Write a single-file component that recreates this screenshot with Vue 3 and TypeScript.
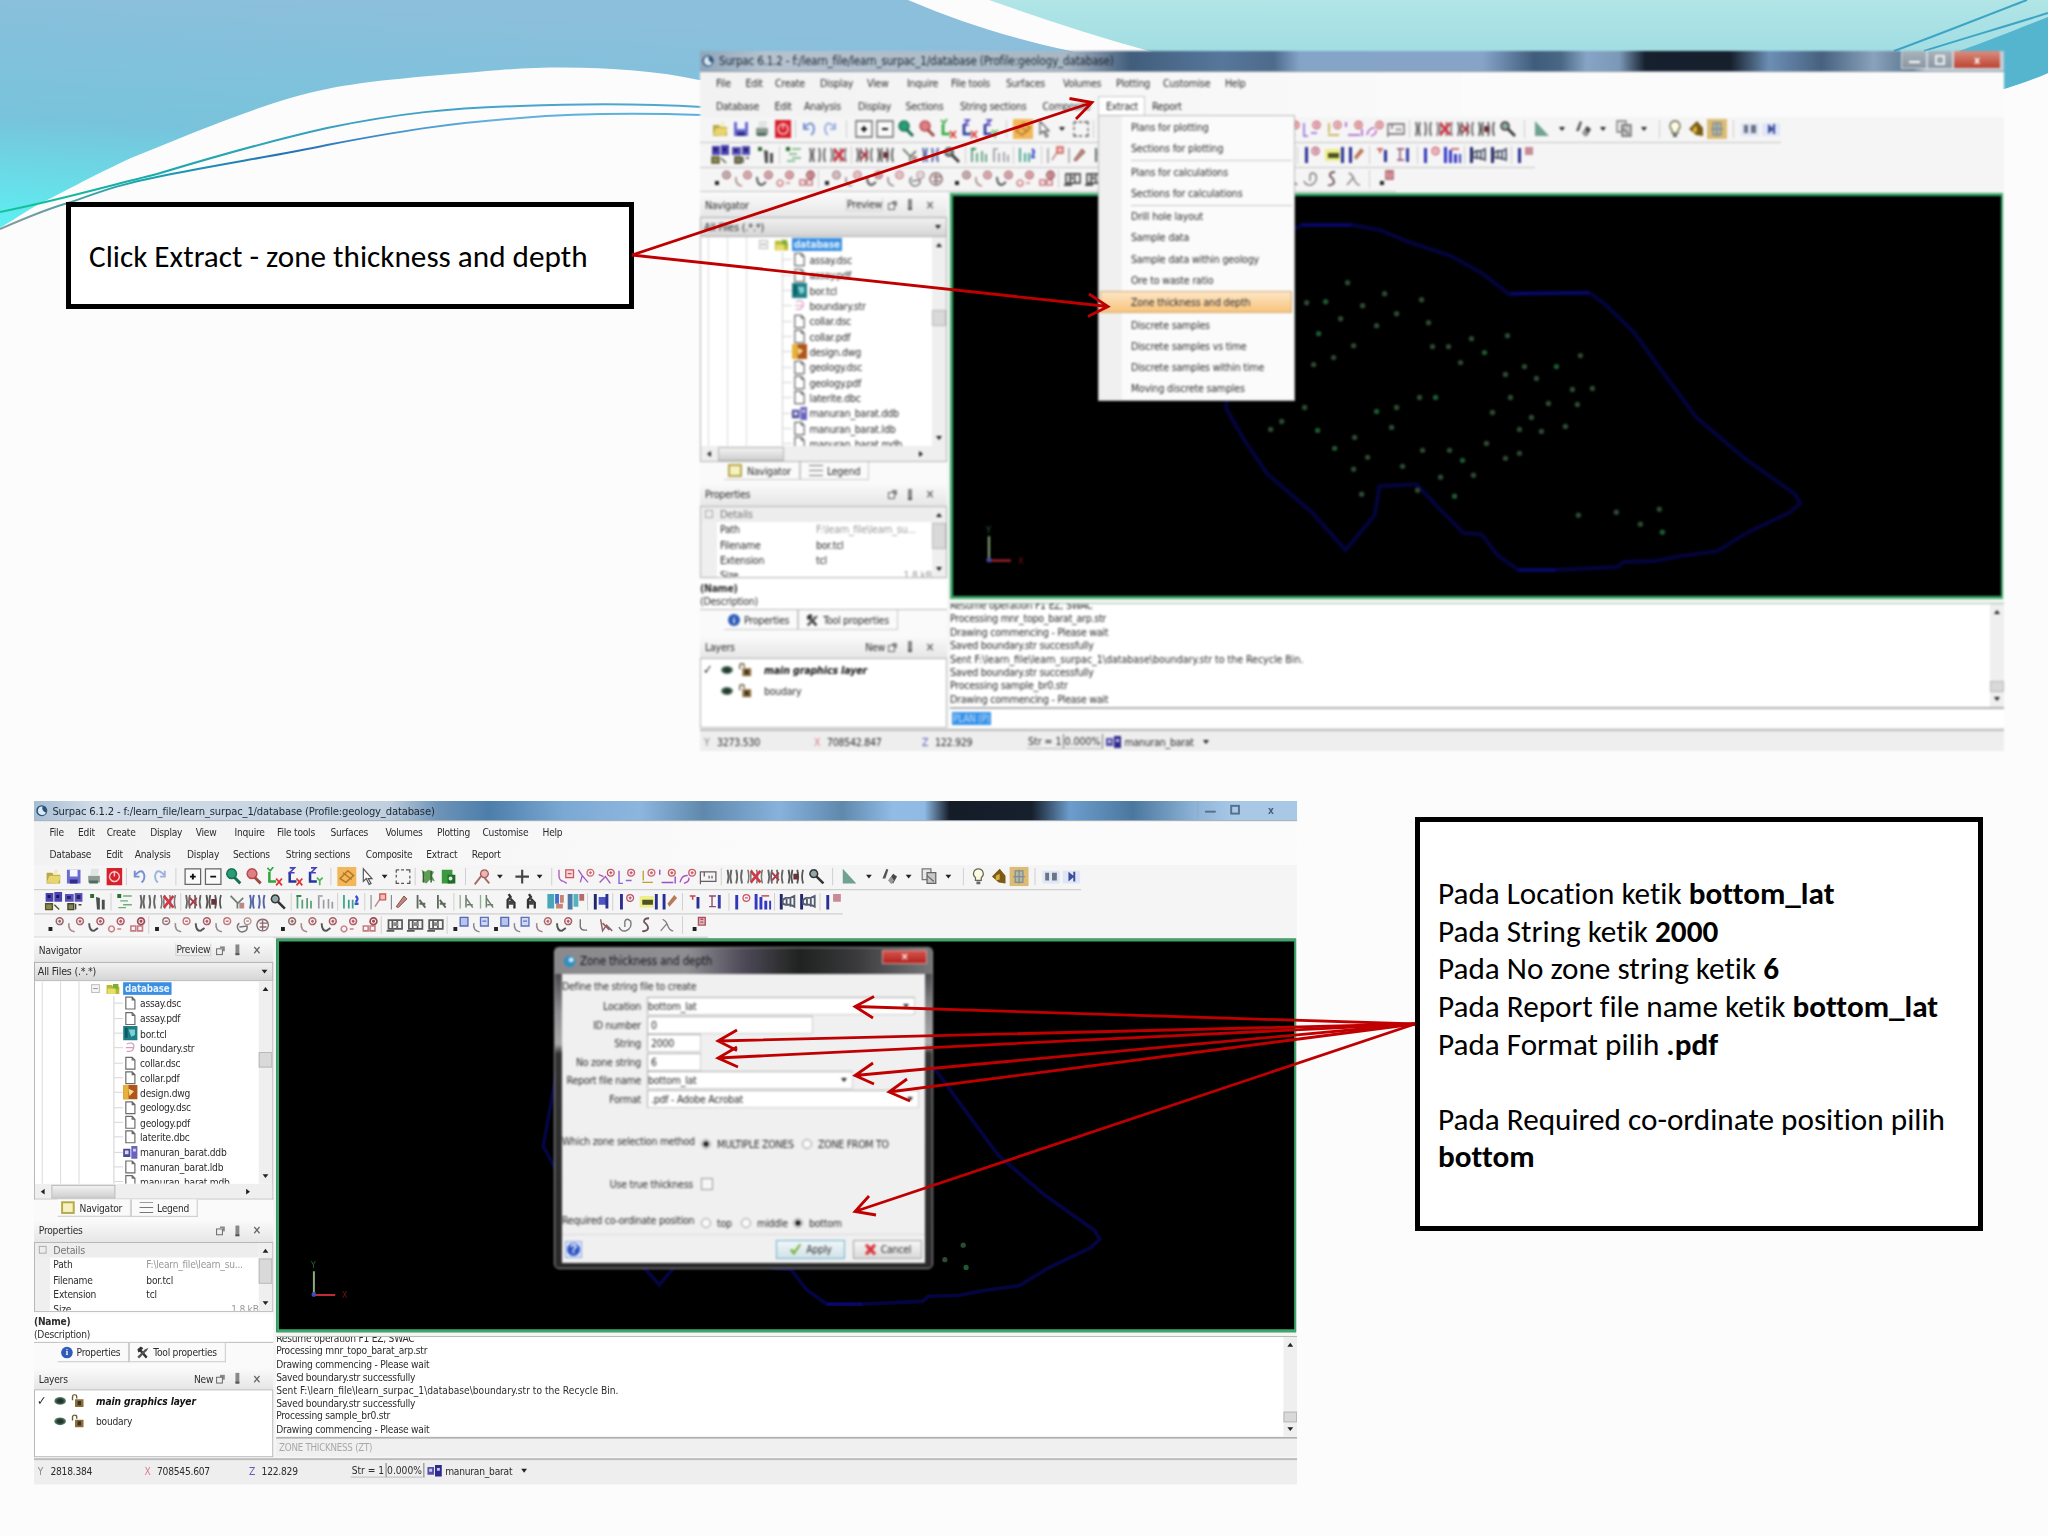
<template>
  <div class="slide">
    <svg class="backdrop" viewBox="0 0 2048 1536">
      <defs>
        <linearGradient id="leftWave" x1="0.3" y1="0" x2="0" y2="1">
          <stop offset="0" stop-color="#8cbfdc" />
          <stop offset="0.55" stop-color="#78c3db" />
          <stop offset="1" stop-color="#5df0f2" />
        </linearGradient>
        <linearGradient id="rightWave" x1="0" y1="0" x2="0" y2="1">
          <stop offset="0" stop-color="#b1e5e6" />
          <stop offset="1" stop-color="#96d8e2" />
        </linearGradient>
        <linearGradient id="strand" gradientUnits="userSpaceOnUse" x1="0" y1="0" x2="700" y2="0">
          <stop offset="0" stop-color="#12c49a" />
          <stop offset="0.22" stop-color="#1aa9a8" />
          <stop offset="0.5" stop-color="#3c9fc4" />
          <stop offset="1" stop-color="#4fabce" />
        </linearGradient>
        <linearGradient id="strandBlue" gradientUnits="userSpaceOnUse" x1="0" y1="0" x2="700" y2="0">
          <stop offset="0" stop-color="#8a9a9a" />
          <stop offset="0.2" stop-color="#16a5b0" />
          <stop offset="0.42" stop-color="#2670b8" />
          <stop offset="0.7" stop-color="#62b2dc" />
          <stop offset="1" stop-color="#5aaede" />
        </linearGradient>
      </defs>
      <path d="M0 0H908C960 22 1010 38 1071 51L1140 80H699C640 67 560 65 500 70C430 76 370 80 327 89C270 100 190 134 131 158C90 177 60 194 39 204C25 212 10 222 0 228Z" fill="url(#leftWave)" />
      <path d="M989 0H2048V73C2030 80 2015 85 2004 89V60H1180L1149 51C1095 36 1040 18 989 0Z" fill="url(#rightWave)" />
      <path d="M2048 17C2010 32 1985 42 1959 51L1990 90L2004 89C2020 84 2035 79 2048 73Z" fill="#55b5cf" />
      <path d="M2027 0C1985 16 1940 34 1894 51M2048 13C2000 28 1965 38 1924 51" fill="none" stroke="#3da5c4" stroke-width="2" />
      <path d="M0 212C60 200 100 188 157 174C210 158 265 142 327 128C400 113 450 108 520 106C600 103 650 104 702 107" fill="none" stroke="url(#strand)" stroke-width="2" />
      <path d="M0 229C30 216 50 208 68 203C100 192 120 184 157 177C220 164 270 157 327 145C400 131 450 123 520 118C580 113 640 113 702 115" fill="none" stroke="url(#strandBlue)" stroke-width="2" />
    </svg>

    <section
      v-for="win in windows"
      :key="win.id"
      class="window"
      :style="{
        left: win.x + 'px',
        top: win.y + 'px',
        height: win.h + 'px',
        transform: `scale(${win.sx}, ${win.sy})`,
      }"
    >
      <header class="titlebar" :class="{ inactive: win.dialog }">
        <svg class="app-icon" viewBox="0 0 16 16"><circle cx="8" cy="8" r="6.5" fill="#2c5378" /><path d="M9 3a5 5 0 1 0 4 7a5 5 0 0 1-4-7" fill="#dce9f4" /></svg>
        <span class="title-text">Surpac 6.1.2 - f:/learn_file/learn_surpac_1/database (Profile:geology_database)</span>
        <div class="controls">
          <span class="ctl"><i class="min" /></span>
          <span class="ctl"><i class="max" /></span>
          <span class="ctl close">x</span>
        </div>
      </header>

      <nav class="menubar">
        <span v-for="m in mainMenu" :key="m.label" :style="{ width: m.w + 'px' }">{{ m.label }}</span>
      </nav>
      <nav class="menubar second">
        <span
          v-for="m in moduleMenu"
          :key="m.label"
          :class="{ open: win.menu && m.label === 'Extract' }"
          :style="{ width: m.w + 'px' }"
        >{{ m.label }}</span>
      </nav>

      <div v-for="(bar, b) in toolbars" :key="b" class="toolbar" :class="'bar-' + b">
        <template v-for="(item, i) in bar" :key="i">
          <i v-if="typeof item === 'number'" class="gap" :class="{ rule: item > 4 }" :style="{ width: item + 'px' }" />
          <i v-else-if="item === 'caret'" class="caret" :class="{ wide: i > 40 }" />
          <svg v-else class="tool" viewBox="0 0 20 20">
            <path
              v-for="(p, n) in icons[item]"
              :key="n"
              :d="p[0]"
              :fill="p[1]"
              :stroke="p[2] || 'none'"
              :stroke-width="p[3] || 1.3"
            />
          </svg>
        </template>
      </div>

      <div class="main">
        <aside class="side">
          <div class="pane-head">
            <span>Navigator</span>
            <span class="preview">Preview</span><i class="dock" /><i class="pin" /><b>×</b>
          </div>
          <div class="filter"><span>All Files (.*.*)</span><i class="caret" /></div>
          <div class="tree">
            <div class="tree-body">
              <div class="guides"><i /><i /><i /></div>
              <ul>
                <li class="root">
                  <i class="expander" />
                  <svg viewBox="0 0 16 16"><path d="M1 4h6l1 2h7v8H1z" fill="#b9b92e" /><path d="M8 3h6v6H8z" fill="#7fae34" /><path d="M2 8h9v6H2z" fill="#e6dd6a" /></svg>
                  <span>database</span>
                </li>
                <li v-for="f in files" :key="f.name">
                  <i class="twig" />
                  <svg viewBox="0 0 16 16">
                    <path v-for="(p, n) in fileIcons[f.kind]" :key="n" :d="p[0]" :fill="p[1]" :stroke="p[2] || 'none'" stroke-width="1.3" />
                  </svg>
                  <span>{{ f.name }}</span>
                </li>
              </ul>
              <div class="vscroll"><i class="up" /><i class="thumb" /><i class="down" /></div>
            </div>
            <div class="hscroll"><i class="left" /><i class="thumb" /><i class="right" /></div>
          </div>
          <div class="tabs">
            <span class="tab nav"><i class="folder" />Navigator</span>
            <span class="tab"><i class="legend" />Legend</span>
          </div>

          <div class="pane-head props-head">
            <span class="grow">Properties</span><i class="dock" /><i class="pin" /><b>×</b>
          </div>
          <div class="props">
            <div class="props-grid">
              <p class="details"><i class="box" />Details</p>
              <p><span>Path</span><em>F:\learn_file\learn_su...</em></p>
              <p><span>Filename</span>bor.tcl</p>
              <p><span>Extension</span>tcl</p>
              <p><span>Size</span><em class="num">1.8 kB</em></p>
            </div>
            <div class="vscroll"><i class="up" /><i class="thumb" /><i class="down" /></div>
          </div>
          <div class="desc"><strong>(Name)</strong><span>(Description)</span></div>
          <div class="tabs prop-tabs">
            <span class="tab nav"><i class="info">i</i>Properties</span>
            <span class="tab">
              <svg viewBox="0 0 16 16"><path d="M2 4l4-3l3 2l-2 2l7 8l-2 2l-7-8l-2 1z" fill="#333" /><path d="M14 3l-3 1l-9 9l2 2l9-9l2-3" fill="#555" /></svg>
              Tool properties
            </span>
          </div>

          <div class="pane-head layers-head">
            <span class="grow">Layers</span><span class="new">New</span><i class="dock" /><i class="pin" /><b>×</b>
          </div>
          <div class="layers">
            <p v-for="(layer, i) in win.layers" :key="layer">
              <span class="tick">{{ i === 0 ? '✓' : '' }}</span>
              <i class="eye" />
              <svg viewBox="0 0 16 16"><path d="M2 7V3a2.5 2.5 0 0 1 5 0v2" fill="none" stroke="#6b5a3a" stroke-width="1.6" /><path d="M5 6h10v9H5z" fill="#8a6d3b" /><path d="M8 8h4v5H8z" fill="#3e3222" /></svg>
              <span :class="{ active: i === 0 }">{{ layer }}</span>
            </p>
          </div>
        </aside>

        <div class="work">
          <svg class="viewport" viewBox="953 196 1049 401" preserveAspectRatio="none">
            <polygon :points="boundary" fill="none" stroke="#04043e" stroke-width="4" />
            <path d="M1302 225H1352M1511 294L1590 293M1519 571L1556 571" stroke="#08086a" stroke-width="3.5" />
            <circle v-for="(d, i) in holes" :key="i" :cx="d[0]" :cy="d[1]" r="2.7" :fill="i % 6 === 4 ? '#1c5a30' : '#2d4a33'" />
            <path d="M989 537V562" stroke="#8fb07c" stroke-width="2" />
            <path d="M989 561.5H1011" stroke="#c22a35" stroke-width="2" />
            <circle cx="989" cy="561" r="2.5" fill="#3d4fa8" />
            <text x="986" y="534" fill="#2c6a2c" font-size="9">Y</text>
            <text x="1018" y="565" fill="#7c1018" font-size="9">X</text>
          </svg>
          <div class="log">
            <div class="lines">
              <p v-for="(line, i) in logLines" :key="i" :class="{ path: line.startsWith('Sent') }">{{ line }}</p>
            </div>
            <div class="vscroll"><i class="up" /><i class="thumb" /><i class="down" /></div>
          </div>
          <div class="command" :class="{ disabled: win.dialog }"><span>{{ win.command }}</span></div>
        </div>
      </div>

      <footer class="status" :class="{ tall: win.dialog }">
        <span class="coord"><b>Y</b>{{ win.status[0] }}</span>
        <span class="coord x"><b>X</b>{{ win.status[1] }}</span>
        <span class="coord z"><b>Z</b>{{ win.status[2] }}</span>
        <span class="cell">Str = 1</span>
        <span class="cell">0.000%</span>
        <svg viewBox="0 0 16 14"><path d="M0 3h7v8H0z" fill="#5551a8" /><path d="M8 1h7v12H8z" fill="#2e2a8e" /><path d="M2 5h3v3H2zM10 4h3v3h-3z" fill="#c9c8ee" /></svg>
        <span class="db">manuran_barat</span><i class="caret" />
      </footer>

      <div v-if="win.menu" class="dropdown">
        <template v-for="(item, i) in extractMenu" :key="i">
          <hr v-if="item === '-'" />
          <p v-else :class="{ hover: item === 'Zone thickness and depth' }">{{ item }}</p>
        </template>
      </div>
    </section>

    <form class="dialog">
      <header>
        <svg viewBox="0 0 16 16"><circle cx="8" cy="8" r="7" fill="#2f8fc4" /><circle cx="10" cy="6" r="3" fill="#d8effa" /></svg>
        <span>Zone thickness and depth</span>
        <b class="x">×</b>
      </header>
      <div class="dialog-body">
        <p class="intro">Define the string file to create</p>
        <div v-for="f in fields" :key="f.label" class="field">
          <label>{{ f.label }}</label>
          <div class="input" :class="{ combo: f.combo }" :style="{ width: f.w + 'px' }">{{ f.value }}<i v-if="f.combo" class="caret" /></div>
        </div>
        <div class="option method">
          <label>Which zone selection method</label>
          <i class="radio on" /><span class="first">MULTIPLE ZONES</span>
          <i class="radio" /><span>ZONE FROM TO</span>
        </div>
        <div class="option true-thick">
          <label>Use true thickness</label>
          <i class="check" />
        </div>
        <div class="option position">
          <label>Required co-ordinate position</label>
          <i class="radio" /><span class="top">top</span>
          <i class="radio" /><span class="middle">middle</span>
          <i class="radio on" /><span>bottom</span>
        </div>
        <div class="actions">
          <i class="help">?</i>
          <button type="button" class="apply">
            <svg viewBox="0 0 16 16"><path d="M1 9l3-2l2 3l7-9l2 1l-9 13z" fill="#7cb342" /></svg>Apply
          </button>
          <button type="button">
            <svg viewBox="0 0 16 16"><path d="M1 3l3-2l4 4l4-4l3 2l-4 5l4 5l-3 2l-4-4l-4 4l-3-2l4-5z" fill="#d9383f" /></svg>Cancel
          </button>
        </div>
      </div>
    </form>

    <div class="callout one"><p>Click Extract - zone thickness and depth</p></div>
    <div class="callout two">
      <p>Pada Location ketik <b>bottom_lat</b></p>
      <p>Pada String ketik <b>2000</b></p>
      <p>Pada No zone string ketik <b>6</b></p>
      <p>Pada Report file name ketik <b>bottom_lat</b></p>
      <p>Pada Format pilih <b>.pdf</b></p>
      <p>&nbsp;</p>
      <p>Pada Required co-ordinate position pilih</p>
      <p><b>bottom</b></p>
    </div>

    <svg class="arrows" viewBox="0 0 2048 1536">
      <path v-for="(a, i) in arrows" :key="i" :d="a" />
    </svg>
  </div>
</template>

<script setup lang="ts">
type Shape = [string, string, string?, number?];

interface AppWindow {
  id: string;
  x: number;
  y: number;
  h: number;
  sx: number;
  sy: number;
  menu: boolean;
  dialog: boolean;
  command: string;
  layers: string[];
  status: string[];
}

const windows: AppWindow[] = [
  {
    id: 'extract',
    x: 700,
    y: 51,
    h: 700,
    sx: 1,
    sy: 1,
    menu: true,
    dialog: false,
    command: 'PLAN (P)',
    layers: ['main graphics layer', 'boudary'],
    status: ['3273.530', '708542.847', '122.929'],
  },
  {
    id: 'zone',
    x: 34,
    y: 801,
    h: 705,
    sx: 0.9686,
    sy: 0.9693,
    menu: false,
    dialog: true,
    command: 'ZONE THICKNESS (ZT)',
    layers: ['main graphics layer', 'boudary'],
    status: ['2818.384', '708545.607', '122.829'],
  },
];

// w is the distance to the start of the next entry
const mainMenu = [
  { label: 'File', w: 29.5 },
  { label: 'Edit', w: 29.5 },
  { label: 'Create', w: 45 },
  { label: 'Display', w: 47 },
  { label: 'View', w: 40 },
  { label: 'Inquire', w: 44 },
  { label: 'File tools', w: 55 },
  { label: 'Surfaces', w: 57 },
  { label: 'Volumes', w: 53 },
  { label: 'Plotting', w: 47 },
  { label: 'Customise', w: 62 },
  { label: 'Help', w: 40 },
];

const moduleMenu = [
  { label: 'Database', w: 58.5 },
  { label: 'Edit', w: 29.5 },
  { label: 'Analysis', w: 54 },
  { label: 'Display', w: 47.5 },
  { label: 'Sections', w: 54.5 },
  { label: 'String sections', w: 82.5 },
  { label: 'Composite', w: 62.5 },
  { label: 'Extract', w: 47 },
  { label: 'Report', w: 50 },
];

const extractMenu = [
  'Plans for plotting',
  'Sections for plotting',
  '-',
  'Plans for calculations',
  'Sections for calculations',
  '-',
  'Drill hole layout',
  'Sample data',
  'Sample data within geology',
  'Ore to waste ratio',
  'Zone thickness and depth',
  'Discrete samples',
  'Discrete samples vs time',
  'Discrete samples within time',
  'Moving discrete samples',
];

const ring = 'M11 6a3.5 3.5 0 1 0 7 0a3.5 3.5 0 1 0-7 0M13 6h3M14.5 4.5v3';
const ringMinus = 'M11 6a3.5 3.5 0 1 0 7 0a3.5 3.5 0 1 0-7 0M13 6h3';
const stripes = 'M2 3q2 7 0 14M6 3q-2 7 0 14M11 3q2 7 0 14M17 3q-2 7 0 14';

const icons: Record<string, Shape[]> = {
  open: [['M3 6h6l1 2h7v9H3z', '#b9a648'], ['M3 16l3-7h12l-3 8z', '#e8d56c'], ['M11 3h4l-1 5h-4z', '#f3ecc0']],
  save: [['M3 3h14v14H3z', '#6a6ad0'], ['M6 3h8v7H6z', '#f4f4ff'], ['M6 13h8v4H6z', '#30308a']],
  print: [['M4 9h12v7H4z', '#8d9a92'], ['M7 2h8l-1 7H6z', '#dfe5e0'], ['M5 14h9v3H5z', '#4e6a58']],
  stop: [['M2 1h16v18H2z', '#d8202c'], ['M10 5a5 5 0 1 0 .1 0M10 4v6', 'none', '#f6c8c8', 1.5]],
  undo: [['M5 9q8-9 10 0q0 5-3 7M5 4v6h5', 'none', '#7690d4', 2]],
  redo: [['M15 9q-8-9-10 0q0 5 3 7M15 4v6h-5', 'none', '#9cb2e0', 2]],
  boxplus: [['M2 2h16v16H2z', '#fafafa', '#666'], ['M10 7v6M7 10h6', 'none', '#111', 2]],
  boxminus: [['M2 2h16v16H2z', '#fafafa', '#666'], ['M7 10h6', 'none', '#111', 2]],
  magGreen: [['M8 2a5 5 0 1 0 .1 0', '#2a9d77', '#16724f', 1.5], ['M11 11l6 6', 'none', '#1b6e4e', 3]],
  magRed: [['M8 2a5 5 0 1 0 .1 0', '#dd7f83', '#b84a50', 1.5], ['M11 11l6 6', 'none', '#9c4a40', 3]],
  mag: [['M7 3a4 4 0 1 0 .1 0', '#8fa8a8', '#333', 1.5], ['M10 10l7 7', 'none', '#333', 2.6]],
  axisA: [['M5 5v10h7', 'none', '#2da83a', 2.6], ['M3 1l3 3l3-4', 'none', '#2da83a', 1.6], ['M12 12l6 7M18 12l-6 7', 'none', '#d33', 1.8]],
  axisB: [['M5 5v10h7', 'none', '#23389a', 2.6], ['M5 1h5l-5 5h5', 'none', '#4b3fbe', 1.6], ['M12 12l6 7M18 12l-6 7', 'none', '#d33', 1.8]],
  axisC: [['M5 5v10h7', 'none', '#23389a', 2.6], ['M6 1h5l-5 5h5', 'none', '#4b3fbe', 1.6], ['M12 11l3 3l3-3M15 14v5', 'none', '#46b84f', 1.7]],
  plane: [['M0 0h20v20H0z', '#f2b758'], ['M3 12l8-8l6 5l-8 7zM6 6l9 7', 'none', '#b3762a', 1.5]],
  pointer: [['M6 2v13l3-3l3 6l2-1l-3-5h4z', '#fff', '#555', 1.2]],
  marquee: [['M3 3h3M8 3h3M13 3h4v3M17 9v3M17 14v3h-3M11 17H8M6 17H3v-3M3 11V8M3 6V3', 'none', '#555', 1.3]],
  people: [['M3 3l4 2l3-2l6 2l-2 4l3 6l-5-2l-4 4l-4-2l2-4z', '#5f9d55'], ['M5 5v11M13 4v12', 'none', '#355c38', 1.5]],
  report: [['M3 3h11v14H3z', '#3c9a3e'], ['M9 8h8v9H9z', '#226b2c'], ['M12 10a2 2 0 1 0 .1 0', '#d8efd0']],
  key: [['M12 3a4 4 0 1 0 .1 0', '#e5b9b6', '#a55', 1.3], ['M9 9l-7 9M12 11l5 6', 'none', '#a86a66', 2]],
  cross: [['M10 3v14M3 10h14', 'none', '#444', 2.2]],
  strA: [['M3 3v6M3 9q0 5 5 6M8 15l3 2', 'none', '#b05ac0', 1.4], ['M10 3h8v8h-8zM12 7h4', '#f6d7da', '#cc5560', 1.3]],
  strB: [['M2 3l4 6l-2 7M6 9l6 7', 'none', '#a05ac8', 1.4], [ring, 'none', '#d36a74', 1.3]],
  strC: [['M3 16l6-6l5 7M2 8l5 2', 'none', '#a85ab8', 1.4], [ring, 'none', '#c85560', 1.3]],
  strD: [['M2 4v13h4M9 14h6', 'none', '#8d66d8', 1.5], [ring, 'none', '#cc5a70', 1.4]],
  strE: [['M6 4v10M5 16h11', 'none', '#c0a030', 1.4], [ring, 'none', '#cc6a70', 1.4]],
  strF: [['M2 3v5M18 10v7M4 16h12', 'none', '#9a50c8', 1.5], [ring, 'none', '#cc5a60', 1.4]],
  strG: [['M2 16q2-8 8-7M6 17q6-2 5-6', 'none', '#b050c0', 1.4], [ring, 'none', '#c8606a', 1.4]],
  ruler: [['M2 5h16v10H2zM6 5v5M11 9v3M14 9v3M2 15v3', 'none', '#665e66', 1.3]],
  hatch: [[stripes, 'none', '#666', 1.9]],
  hatchRed: [[stripes, 'none', '#777', 1.6], ['M5 4l10 12M15 4L5 16', 'none', '#cf3a48', 2.8]],
  hatchIn: [[stripes, 'none', '#666', 1.8], ['M6 6l7 8M13 6l-7 8', 'none', '#a83c46', 2]],
  hatchOut: [[stripes, 'none', '#555', 1.8], ['M7 7h5v6H7z', '#6a3238']],
  hatchBlue: [[stripes, 'none', '#5464a8', 2]],
  wedge: [['M3 2v15h14z', '#6fa293']],
  pens: [['M3 12l4-10l2 1l-3 9z', '#555'], ['M9 14l5-7l4 3l-4 7z', '#484848'], ['M9 14l3-4l3 4l-3 4z', '#9a9a9a']],
  copy: [['M3 2h9v11H3z', '#e8e8e8', '#777', 1.3], ['M8 6h9v11H8zM8 9l7 6', '#c7c7c7', '#666', 1.3]],
  bulb: [['M10 2a5 5 0 0 0-3 9v3h6v-3a5 5 0 0 0-3-9', '#fdfbe0', '#665', 1.3], ['M8 15h4v3H8z', '#666']],
  layersIcon: [['M3 10l8-8l6 7v8l-7-1z', '#7a5a14'], ['M7 9l4-2v6l-4 1z', '#d6b03a']],
  lit: [['M0 0h20v20H0z', '#dcbc74'], ['M6 4h8v12H6zM10 3v14M4 10h12', '#b8b8a0', '#7f8c96', 1.3]],
  winA: [['M1 4h18v13H1z', '#dfe6f4'], ['M4 6h4v8H4zM11 6h5v8h-5z', '#6b7488']],
  winB: [['M1 4h18v13H1z', '#dfe6f8'], ['M7 5l6 5l-6 5zM12 5h2v10h-2z', '#3c4e98']],
  dbOpen: [['M2 1h8v9H2zM11 0h8v10h-8z', '#4a43b0'], ['M4 3h3v3H4zM13 3h3v3h-3z', '#18155c'], ['M2 12h7v6H2zM11 13l5 5', '#8a8a52', '#55552a', 1.4]],
  dbAdd: [['M1 2h9v8H1zM11 1h8v9h-8z', '#5a54b8'], ['M3 4h4v3H3zM13 3h4v4h-4z', '#26236e'], ['M4 12h6v6H4zM12 12v6M15 13h3', '#84845a', '#44442c', 1.4]],
  dots: [['M3 2h4v4H3z', '#2d6b2d'], ['M9 5l4 1v12h-3zM15 8h3v10h-3z', '#4b4f4b']],
  plan: [['M2 2h4v4H2z', '#2a7034'], ['M8 4h9M5 9h8M8 13h9M3 16h8', 'none', '#6fae78', 1.4]],
  branch: [['M3 4l7 7v6M16 6l-6 6', 'none', '#6c7f70', 1.8], ['M12 11h5v6h-5z', '#b88']],
  barsA: [['M3 3v14M8 8v9M13 6v11M17 9v8', 'none', '#58a078', 1.8], ['M2 4h5', 'none', '#2d8a4e', 2]],
  barsB: [['M3 5v12M8 8v9M13 7v10M17 10v7', 'none', '#9a9aa2', 1.7], ['M2 4h5', 'none', '#999', 1.5]],
  barsC: [['M3 3v14M8 8v9M12 8v9', 'none', '#3da08a', 1.8], ['M15 4q4 3 0 6M14 12h4', 'none', '#3a50d0', 2.4]],
  penRed: [['M2 18V3', 'none', '#8a8a8a', 1.2], ['M6 15l6-9', 'none', '#b88', 1.5], ['M11 2h6v6h-6z', '#f0c0bc', '#cc5a50', 1.4]],
  penB: [['M2 18V3', 'none', '#8a8a8a', 1.2], ['M7 15l8-11l3 3l-9 9z', '#b98a80', '#8a4a40', 1]],
  curA: [['M6 3v14M8 8l6 8M8 12h6', 'none', '#5d6a5d', 1.9]],
  curB: [['M3 3v14', 'none', '#8fb08f', 1.4], ['M9 3v13M9 6l7 10M10 13h6', 'none', '#6f806f', 1.6]],
  curC: [['M7 2l2 3l-3 3v9M9 7l4 4v6', 'none', '#333', 2.4], ['M7 9h5v4H7z', '#444']],
  cyan: [['M2 2h7v15H2z', '#49a5b8'], ['M10 2h4v10h-4z', '#3f6fd2'], ['M15 3h4v8h-4zM11 12h7v5h-7z', '#c78472']],
  cyanB: [['M2 2h5v16H2z', '#4a7aa8'], ['M8 2h5v13H8z', '#56b2c0'], ['M14 2h5v7h-5z', '#b86a6a']],
  poleA: [['M3 2h3v16H3z', '#22266c'], ['M8 5h9v8H8z', '#4b55c4'], ['M15 2h3v15h-3z', '#2b308e']],
  poleB: [['M4 2h3v16H4z', '#2a2f94'], [ring, 'none', '#b8506a', 1.3]],
  poleY: [['M0 4h15v12H0z', '#eeee8a'], ['M3 8h11v5H3z', '#4d5424'], ['M16 2h3v16h-3z', '#2a2f94']],
  poleP: [['M3 2h3v16H3z', '#2a2f94'], ['M8 12l7-9l3 3l-8 9z', '#b87a58']],
  poleR: [['M11 5h3v12h-3z', '#2a2f94'], ['M4 4h6M7 4v4', 'none', '#c44', 1.6]],
  poleI: [['M12 3h3v14h-3z', '#3a3fa4'], ['M3 4h7M3 15h7M6 4v11', 'none', '#8a4a68', 1.4]],
  poleM: [['M3 3h3v15H3z', '#3136b8'], [ringMinus, 'none', '#d05060', 1.3]],
  poleN: [['M2 2h3v16H2zM7 5h3v13H7zM12 9h3v9h-3zM17 9h2v9h-2z', '#3338c4'], ['M9 4h8', 'none', '#c66', 1.8]],
  chain: [['M2 2h3v16H2z', '#22266c'], ['M5 8l3-2h5l4-2v11l-4-2H8l-3-1zM9 7v7M13 6v9', 'none', '#555d70', 1.9]],
  poleX: [['M3 3h3v15H3z', '#2a2f94'], ['M10 2h8v8h-8z', '#c88a98']],
  ptAdd: [['M3 12h4v4H3z', '#222'], [ring, 'none', '#96686c', 1.6]],
  curveAdd: [['M3 8q-1 8 6 9', 'none', '#a88', 1.6], [ring, 'none', '#b0686e', 1.6]],
  segAdd: [['M3 8q0 8 5 8l4-3', 'none', '#555', 2], [ring, 'none', '#ac5e66', 1.6]],
  ringAdd: [['M5 11a3 3 0 1 0 .1 0M11 14h4', 'none', '#cc8088', 1.6], [ring, 'none', '#b55a62', 1.6]],
  ringTwo: [['M4 11h5v5H4zM11 11h5v5h-5z', 'none', '#c87a80', 1.6], [ring, 'none', '#a04a54', 1.8]],
  loop: [['M6 8a5 5 0 1 0 8 3l-8 1', 'none', '#777', 1.5], [ringMinus, 'none', '#a88', 1.2]],
  loopTwo: [['M9 4a6 6 0 1 0 .1 0M6 8h8M6 12h7M9 5v10', 'none', '#8a6a70', 1.4]],
  ptDel: [['M3 12h4v4H3z', '#222'], [ringMinus, 'none', '#9a7074', 1.5]],
  curveDel: [['M3 8q-1 8 6 9', 'none', '#9a8a8c', 1.6], [ringMinus, 'none', '#c4767e', 1.5]],
  tagged: [['M4 5h14v9H4zM8 5v9M13 5v9M2 16h8', 'none', '#5a5a5a', 1.8], ['M9 7h5v4H9z', '#8a8a8a']],
  sqBlue: [['M3 12h4v4H3z', '#223'], ['M10 2h8v9h-8z', '#b9c4ec', '#5568b8', 1.4]],
  sqCurve: [['M3 8q-1 8 6 9', 'none', '#889', 1.5], ['M10 2h8v9h-8zM12 6h4', '#d0d8f4', '#5c70bc', 1.4]],
  elbow: [['M5 4v8q1 4 7 3', 'none', '#777', 1.5]],
  fold: [['M5 4l2 12l4-6l6 6M7 8l7 7', 'none', '#8d6066', 1.5]],
  spiral: [['M3 12q2 5 7 4q7-3 5-10q-4-4-6 0v6', 'none', '#777', 1.4]],
  ess: [['M13 3q-6 0-5 4q6 5 3 8q-3 2-5 1', 'none', '#6d5258', 1.9]],
  lambda: [['M6 4q4 2 5 6q2 6 6 6M10 9l-6 7', 'none', '#8a8084', 1.4]],
  ptBox: [['M4 12h4v4H4z', '#222'], ['M10 2h7v8h-7zM12 4h3M12 7h3', '#e6b8bc', '#a8505c', 1.4]],
};

// numbers are spacing between groups, strings are buttons
const toolbars: (string | number)[][] = [
  [
    'open', 'save', 'print', 'stop', 5, 'undo', 'redo', 13,
    'boxplus', 'boxminus', 'magGreen', 'magRed', 'axisA', 'axisB', 'axisC', 12,
    'plane', 'pointer', 'caret', 'marquee', 5, 'people', 'report', 14,
    'key', 'caret', 4, 'cross', 'caret', 8,
    'strA', 'strB', 'strC', 'strD', 'strE', 'strF', 'strG', 'ruler', 7,
    'hatch', 'hatchRed', 'hatchIn', 'hatchOut', 'mag', 13,
    'wedge', 'caret', 'pens', 'caret', 'copy', 'caret', 10,
    'bulb', 'layersIcon', 'lit', 12, 'winA', 'winB',
  ],
  [
    'dbOpen', 'dbAdd', 3, 'dots', 8, 'plan', 3, 'hatch', 'hatchRed', 5, 'hatchIn', 'hatchOut', 3,
    'branch', 'hatchBlue', 'mag', 6, 'barsA', 1, 'barsB', 5, 'barsC', 8, 'penRed', 'penB', 2,
    'curA', 'curA', 5, 'curB', 'curB', 4, 'curC', 'curC', 3, 'cyan', 'cyanB', 5, 'poleA', 5, 'poleB', 3,
    'poleY', 'poleP', 6, 'poleR', 'poleI', 6, 'poleM', 'poleN', 5, 'chain', 'chain', 5, 'poleX',
  ],
  [
    2, 'ptAdd', 'curveAdd', 'segAdd', 'ringAdd', 'ringTwo', 5,
    'ptDel', 'curveDel', 'segAdd', 'curveDel', 'loop', 'loopTwo', 4,
    'ptAdd', 'curveAdd', 'segAdd', 'ringAdd', 'ringTwo', 5, 'tagged', 'tagged', 'tagged', 5,
    'sqBlue', 'sqCurve', 'sqBlue', 'sqCurve', 2, 'curveAdd', 'segAdd', 1,
    'elbow', 'fold', 'spiral', 'ess', 'lambda', 12, 'ptBox',
  ],
];

const fileIcons: Record<string, Shape[]> = {
  doc: [['M3 1.5h7l3 3v10H3zM10 1.5v3h3', '#fff', '#6a6a6a']],
  tcl: [['M0 0h16v16H0z', '#1f7f86'], ['M6 4h7v6l-4 2z', '#7fd0d0'], ['M2 2h3v11H2z', '#0f5a68']],
  str: [['M4 4q7-3 8 2q0 7-8 6M3 8h9', 'none', '#d79ac0']],
  dwg: [['M0 0h16v16H0z', '#b0541c'], ['M0 0h6v16H0z', '#e6b23a'], ['M6 4l6 3l-5 5z', '#f6dc8c']],
  ddb: [['M0 4h8v9H0z', '#4a4a9a'], ['M9 1h7v14H9z', '#6a64bc'], ['M2 6h4v4H2zM11 4h3v3h-3z', '#d8d6f2']],
};

const files = [
  { name: 'assay.dsc', kind: 'doc' },
  { name: 'assay.pdf', kind: 'doc' },
  { name: 'bor.tcl', kind: 'tcl' },
  { name: 'boundary.str', kind: 'str' },
  { name: 'collar.dsc', kind: 'doc' },
  { name: 'collar.pdf', kind: 'doc' },
  { name: 'design.dwg', kind: 'dwg' },
  { name: 'geology.dsc', kind: 'doc' },
  { name: 'geology.pdf', kind: 'doc' },
  { name: 'laterite.dbc', kind: 'doc' },
  { name: 'manuran_barat.ddb', kind: 'ddb' },
  { name: 'manuran_barat.ldb', kind: 'doc' },
  { name: 'manuran_barat.mdb', kind: 'doc' },
];

const logLines = [
  'Resume operation F1 EZ, SWAC',
  'Processing mnr_topo_barat_arp.str',
  'Drawing commencing - Please wait',
  'Saved boundary.str successfully',
  'Sent F:\\learn_file\\learn_surpac_1\\database\\boundary.str to the Recycle Bin.',
  'Saved boundary.str successfully',
  'Processing sample_br0.str',
  'Drawing commencing - Please wait',
];

const boundary =
  '1302,225 1352,225 1380,230 1409,242 1451,256 1482,273 1509,294 1590,293 1605,304 1634,332 1660,368 ' +
  '1697,418 1744,458 1796,495 1801,504 1791,513 1749,533 1718,552 1681,557 1655,562 1624,563 1618,568 ' +
  '1556,571 1519,571 1498,556 1482,535 1464,534 1443,513 1417,485 1380,487 1375,516 1346,551 1312,513 ' +
  '1268,475 1244,440 1226,408 1240,330 1260,250';

const holes: [number, number][] = [
  [1348, 283], [1385, 294], [1422, 300], [1307, 303], [1326, 302], [1363, 306], [1397, 314], [1341, 319],
  [1377, 326], [1429, 323], [1319, 334], [1354, 346], [1472, 339], [1508, 336], [1433, 347], [1449, 347],
  [1485, 353], [1581, 356], [1334, 358], [1461, 363], [1314, 365], [1525, 367], [1557, 367], [1506, 375],
  [1537, 379], [1573, 390], [1593, 389], [1420, 398], [1436, 398], [1511, 398], [1549, 404], [1578, 405],
  [1305, 408], [1397, 408], [1377, 412], [1493, 413], [1532, 418], [1282, 422], [1271, 430], [1566, 427],
  [1318, 431], [1392, 428], [1520, 430], [1542, 432], [1355, 438], [1487, 444], [1335, 449], [1423, 451],
  [1450, 451], [1520, 454], [1506, 459], [1368, 458], [1463, 461], [1403, 467], [1354, 470], [1474, 476],
  [1441, 478], [1418, 491], [1455, 497], [1362, 495], [1579, 516], [1617, 513], [1660, 510], [1641, 525],
  [1663, 533],
];

const fields = [
  { label: 'Location', value: 'bottom_lat', w: 268, combo: true },
  { label: 'ID number', value: '0', w: 166, combo: false },
  { label: 'String', value: '2000', w: 54, combo: false },
  { label: 'No zone string', value: '6', w: 54, combo: false },
  { label: 'Report file name', value: 'bottom_lat', w: 206, combo: true },
  { label: 'Format', value: '.pdf - Adobe Acrobat', w: 272, combo: true },
];

const arrows = [
  'M632 255L1092 102.5M1069.5 98.5L1092 102.5L1076 119',
  'M632 255L1108 306.5M1089 294L1108 306.5L1088 316.5',
  'M1415 1024L855 1006.5M874 996.5L855 1006.5L873 1018',
  'M1415 1024L718 1041M737 1030L718 1041L737 1050.5',
  'M1415 1024L718 1058M737 1047L718 1058L738 1067',
  'M1415 1024L855 1075.5M873 1063L855 1075.5L874 1084',
  'M1415 1024L889 1092M907 1079L889 1092L910 1101',
  'M1415 1024L855 1211.5M869 1196L855 1211.5L876 1215',
];
</script>

<style>
html,
body {
  margin: 0;
  background: #fcfcfc;
}
</style>

<style scoped>
.slide {
  position: relative;
  width: 2048px;
  height: 1536px;
  overflow: hidden;
  background: #fcfcfc;
  font-family: 'DejaVu Sans Condensed', 'Liberation Sans', sans-serif;
}

.slide p,
.slide ul {
  margin: 0;
  padding: 0;
  list-style: none;
}

.backdrop,
.arrows {
  position: absolute;
  left: 0;
  top: 0;
  width: 2048px;
  height: 1536px;
}

.arrows path {
  fill: none;
  stroke: #c00000;
  stroke-width: 2.8;
}

/* application window */
.window {
  position: absolute;
  display: flex;
  flex-direction: column;
  width: 1304px;
  background: #f5f5f5;
  color: #2c2c2c;
  font-size: 10.5px;
  letter-spacing: -0.25px;
  transform-origin: 0 0;
  filter: blur(0.8px);
}

.titlebar {
  display: flex;
  align-items: center;
  flex: none;
  height: 21px;
  box-sizing: border-box;
  border-bottom: 1px solid #8d99a5;
  background: linear-gradient(90deg, #8fa6bb 0, #b6c3cf 5%, #a9b7c4 28%, #6d8299 31%, #415d7c 33%, #56779b 40%, #4d6a8b 44%, #84a4c8 46%, #86a4c8 60%, #3f5c7c 64%, #4a6685 66%, #87a4c6 68%, #7b98b8 70.5%, #16202e 72.5%, #161f2c 79%, #6c8fb5 82%, #46617f 86%, #8aa2bb 90%, #5a7590 93%, #c2ccd6 94%);
}

.titlebar.inactive {
  background: linear-gradient(90deg, #a5bdd3 0, #d3dee9 5%, #c0cfde 28%, #6d93b8 32%, #4c7eaa 36%, #7ba9d4 42%, #8cb6de 48%, #5f88ac 53%, #86b2dc 59%, #5f88ac 64%, #90bce6 68%, #8ebae4 70.5%, #141c28 72.5%, #161f2c 79%, #6c9dcc 82%, #4b779e 87%, #8fb4d8 92%, #a9c8e6 95%);
}

.app-icon {
  width: 14px;
  height: 14px;
  margin: 0 4px 0 1px;
}

.title-text {
  flex: 1;
  color: #1c2733;
  font-size: 11.5px;
  letter-spacing: -0.16px;
  white-space: nowrap;
}

.controls {
  display: flex;
  height: 18px;
  margin-right: 3px;
  align-self: flex-start;
}

.ctl {
  display: flex;
  align-items: center;
  justify-content: center;
  width: 24px;
  border: 1px solid #d3dae0;
  border-top: 0;
  background: linear-gradient(#a9b3bc, #8a96a1);
}

.ctl.close {
  width: 46px;
  background: linear-gradient(#d98e80, #bd4231);
  color: #fff;
  font-weight: bold;
}

.inactive .ctl,
.inactive .ctl.close {
  border-color: transparent;
  border-left-color: #8fa8c0;
  background: none;
  color: #4a6078;
}

.inactive .ctl + .ctl {
  border-left-color: transparent;
}

.min {
  width: 11px;
  height: 2px;
  margin-top: 4px;
  background: #fff;
}

.max {
  width: 6px;
  height: 6px;
  border: 2px solid #eef2f5;
}

.inactive .min {
  background: #54708c;
}

.inactive .max {
  border-color: #54708c;
}

.menubar {
  display: flex;
  align-items: center;
  flex: none;
  height: 22px;
  padding-left: 16px;
  background: linear-gradient(90deg, #f2f2f3, #fbfbfb 60%);
  white-space: nowrap;
}

.menubar.second {
  height: 23px;
}

.menubar .open {
  box-sizing: border-box;
  height: 20px;
  margin: 1px 0 0 -7px;
  padding: 3px 0 0 7px;
  border: 1px solid #c8c8c8;
  border-bottom: 0;
  background: #fff;
}

.menubar .open + span {
  margin-left: 7px;
}

.toolbar {
  display: flex;
  align-items: center;
  align-self: flex-start;
  flex: none;
  height: 23px;
  padding: 0 0 1px 9px;
  border-bottom: 1px solid #c4c4c6;
}

.bar-0 {
  height: 24px;
}

.bar-2 {
  height: 21px;
  padding-bottom: 2px;
}

.tool {
  flex: none;
  width: 20px;
  height: 20px;
  margin: 0 0.5px;
}

.gap {
  flex: none;
  height: 18px;
}

.gap.rule {
  box-sizing: border-box;
  background: linear-gradient(#cfcfcf, #cfcfcf) center / 1px 100% no-repeat;
}

.caret {
  display: flex;
  flex: none;
  align-items: center;
  justify-content: center;
  width: 16px;
}

.toolbar .caret.wide {
  width: 20px;
}

.caret::before,
.up::before,
.down::before,
.left::before,
.right::before {
  content: '';
  border: 3px solid transparent;
  border-top: 4px solid #222;
  border-bottom: 0;
}

.main {
  display: flex;
  flex: 1;
  min-height: 0;
}

.side {
  display: flex;
  flex-direction: column;
  width: 247px;
  margin-right: 3px;
  background: #fafafa;
}

.pane-head {
  display: flex;
  align-items: center;
  flex: none;
  height: 25px;
  padding: 0 10px 0 5px;
  background: linear-gradient(#fbfbfb, #e6e6e7);
}

.pane-head > span:first-child {
  flex: 1;
}

.preview {
  border: 1px solid #d2d2d2;
  border-top: 0;
}

.pane-head b {
  width: 14px;
  color: #666;
  font-size: 12px;
  text-align: center;
}

.dock {
  width: 5px;
  height: 5px;
  margin: 3px 13px 0 5px;
  border: 1.5px solid #666;
  box-shadow: 3px -3px 0 -1px #888;
}

.pin {
  width: 4px;
  height: 9px;
  margin-right: 11px;
  border-bottom: 2px solid #555;
  background: #888;
}

.filter {
  display: flex;
  align-items: center;
  justify-content: space-between;
  flex: none;
  height: 18px;
  padding-left: 3px;
  border: 1px solid #adadad;
  background: linear-gradient(#f1f1f1, #d5d5d6);
  font-size: 11px;
}

.tree {
  display: flex;
  flex-direction: column;
  flex: none;
  height: 224px;
  border: 1px solid #b5b5b5;
  border-top: 0;
  background: #fff;
}

.tree-body {
  display: flex;
  flex: 1;
  min-height: 0;
  overflow: hidden;
}

.guides {
  display: flex;
  width: 62px;
}

.guides i {
  width: 18px;
  border-right: 1px solid #dadada;
}

.guides i:first-child {
  width: 7px;
}

.tree ul {
  flex: 1;
}

.tree li {
  display: flex;
  align-items: center;
  height: 15.34px;
  margin-left: 18.5px;
  border-left: 1px solid #cfcfcf;
}

.tree li.root {
  height: 15.3px;
  margin-left: -4px;
  border: 0;
}

.tree li svg {
  width: 15px;
  height: 15px;
}

.tree li span {
  margin-left: 3px;
}

.tree li.root span {
  padding: 1px 2px;
  background: #3c8fe0;
  color: #e6f3ff;
  font-weight: bold;
  font-size: 10px;
  letter-spacing: -0.1px;
}

.expander {
  width: 7px;
  height: 7px;
  margin-right: 6px;
  border: 1px solid #bbb;
  background: linear-gradient(#999, #999) center / 5px 1px no-repeat #f6f6f6;
}

.twig {
  width: 9px;
  height: 1px;
  background: #d5d5d5;
}

.vscroll {
  display: flex;
  flex-direction: column;
  align-items: center;
  justify-content: space-between;
  flex: none;
  width: 14px;
  padding: 6px 0;
  background: #efefef;
}

.vscroll .thumb {
  width: 12px;
  height: 14px;
  border: 1px solid #b8b8b8;
  background: #d9d9da;
}

.tree .vscroll .thumb {
  margin-bottom: 57px;
  margin-top: 10px;
}

.up,
.down,
.left,
.right {
  display: flex;
}

.up {
  transform: rotate(180deg);
}

.left {
  transform: rotate(90deg);
}

.right {
  transform: rotate(-90deg);
}

.hscroll {
  display: flex;
  align-items: center;
  flex: none;
  height: 15px;
  padding: 0 22px 0 5px;
  background: #efefef;
}

.hscroll .thumb {
  width: 64px;
  height: 12px;
  margin: 0 auto 0 6px;
  border: 1px solid #b5b5b5;
  background: linear-gradient(#f2f2f2, #cfcfd0);
}

.tabs {
  display: flex;
  flex: none;
  height: 19px;
  padding-left: 24px;
}

.tab {
  display: flex;
  align-items: center;
  height: 17px;
  padding: 0 8px;
  border: 1px solid #c9c9c9;
  border-top: 0;
  background: #fafafa;
}

.tab.nav {
  padding-left: 3px;
  border-left-color: transparent;
}

.tab svg {
  width: 14px;
  height: 14px;
  margin: 0 4px 0 -2px;
}

.folder {
  width: 10px;
  height: 9px;
  margin-right: 5px;
  border: 2px solid #b8a84c;
  background: #f6f1c0;
}

.legend {
  width: 14px;
  height: 12px;
  margin-right: 4px;
  background: repeating-linear-gradient(#777 0 1px, transparent 1px 5px);
}

.info {
  width: 12px;
  height: 12px;
  margin-right: 4px;
  border-radius: 50%;
  background: #2e5cb8;
  color: #fff;
  font: bold 9px/12px 'Liberation Serif', serif;
  text-align: center;
}

.props-head {
  height: 24px;
  margin-top: 1px;
}

.props {
  display: flex;
  flex: none;
  box-sizing: border-box;
  height: 72px;
  overflow: hidden;
  border: 1px solid #b5b5b5;
  background: #fff;
}

.props-grid {
  flex: 1;
  min-width: 0;
  background: linear-gradient(90deg, #efefef 16px, #fff 16px);
}

.props-grid p {
  display: flex;
  align-items: center;
  height: 15.4px;
  padding-left: 19px;
  white-space: nowrap;
}

.props-grid p span {
  width: 96px;
}

.props-grid p.details {
  height: 14.5px;
  padding-left: 4px;
  background: #ededed;
  color: #777;
  font-size: 11px;
}

.props-grid em {
  color: #999;
  font-style: normal;
}

.props-grid em.num {
  margin-left: 88px;
}

.box {
  width: 6px;
  height: 6px;
  margin-right: 7px;
  border: 1px solid #aaa;
}

.props .vscroll .thumb {
  height: 24px;
  margin-bottom: 12px;
}

.desc {
  display: flex;
  flex-direction: column;
  justify-content: center;
  flex: none;
  height: 29px;
  margin-top: 2px;
  border-bottom: 1px solid #b9b9b9;
  background: #fff;
  line-height: 13px;
}

.prop-tabs {
  height: 24px;
}

.prop-tabs .tab {
  height: 19px;
}

.layers-head {
  margin-top: 1px;
  height: 23px;
}

.new {
  margin-right: -2px;
}

.layers {
  flex: 1;
  margin-bottom: 1px;
  border: 1px solid #b5b5b5;
  background: #fff;
}

.layers p {
  display: flex;
  align-items: center;
  height: 21px;
}

.layers svg {
  width: 14px;
  height: 14px;
  margin: 0 12px 0 5px;
}

.layers .active {
  color: #111;
  font-weight: bold;
  font-style: italic;
  letter-spacing: -0.1px;
}

.tick {
  width: 20px;
  padding-left: 2px;
  box-sizing: border-box;
  font-size: 13px;
}

.eye {
  width: 12px;
  height: 8px;
  border-radius: 50%;
  background: radial-gradient(#23352c 30%, #6b9a84 80%);
}

.work {
  display: flex;
  flex-direction: column;
  flex: 1;
  min-width: 0;
}

.viewport {
  flex: none;
  width: 1048px;
  height: 400px;
  margin: 1px 1px 0 0;
  border: 3px solid #3aa868;
  border-right-width: 2px;
  background: #000;
}

.log {
  display: flex;
  flex: none;
  height: 103px;
  margin-top: 4px;
  overflow: hidden;
  border-top: 1px solid #a8c0b0;
  border-bottom: 2px solid #b0b0b0;
  background: #fff;
}

.lines {
  flex: 1;
  margin-top: -5px;
}

.lines p {
  height: 13.4px;
  line-height: 13.4px;
  white-space: nowrap;
}

.lines .path {
  letter-spacing: 0;
}

.log .vscroll .thumb {
  height: 9px;
  margin-top: 62px;
}

.command {
  display: flex;
  align-items: center;
  flex: 1;
  margin-bottom: 2px;
  background: #fff;
}

.command span {
  margin-left: 2px;
  padding: 1px;
  background: #3a93e8;
  color: #b8dcfa;
  font-size: 10px;
}

.command.disabled {
  background: #f0f0f0;
}

.command.disabled span {
  background: none;
  color: #a8a8a8;
}

.status {
  display: flex;
  align-items: center;
  flex: none;
  height: 19px;
  padding-top: 1px;
  border-top: 2px solid #bcbcbc;
  background: #eeeeee;
}

.status.tall {
  padding-bottom: 5px;
}

.coord {
  width: 106px;
  padding-left: 4px;
}

.coord.x {
  width: 104px;
}

.coord.z {
  width: 105px;
}

.coord b {
  display: inline-block;
  width: 9px;
  margin-right: 4px;
  color: #889;
  font-weight: normal;
}

.coord.x b {
  color: #e07a8a;
}

.coord.z b {
  color: #5a5ac0;
}

.cell {
  padding: 1px;
  border-right: 1px solid #777;
  border-bottom: 1px solid #bbb;
  letter-spacing: 0;
}

.status svg {
  width: 16px;
  height: 14px;
  margin: 0 3px;
}

.db {
  margin-right: 4px;
}

.dropdown {
  position: absolute;
  left: 398px;
  top: 64px;
  box-sizing: border-box;
  width: 197px;
  height: 286px;
  padding: 1px 0 0;
  border: 1px solid #b9b9b9;
  background: linear-gradient(90deg, #f0f0f0 22px, #fbfbfb 24px);
  letter-spacing: -0.15px;
}

.dropdown p {
  box-sizing: border-box;
  height: 21.1px;
  margin: 0 2px 0 1px;
  padding-left: 31px;
  line-height: 21px;
}

.dropdown p.hover {
  height: 22px;
  margin-bottom: 2px;
  padding-left: 30px;
  border: 1px solid #d0ab72;
  background: linear-gradient(#fde6c6, #f8c47c);
  line-height: 20px;
}

.dropdown hr {
  height: 1px;
  margin: 1px 2px 0.5px 32px;
  border: 0;
  background: #c9c9c9;
}

/* zone thickness dialog */
.dialog {
  position: absolute;
  left: 554px;
  top: 947px;
  display: flex;
  flex-direction: column;
  box-sizing: border-box;
  width: 379px;
  height: 322px;
  padding: 0 7px 5px;
  border: 1px solid #9a9a9a;
  border-radius: 5px;
  background: linear-gradient(#77777b 0, #4b4b4f 8%, #8f8f92 20%, #a9a9ab 30%, #333 33%, #2a2a2c 100%);
  color: #2c2c2c;
  font-size: 10.5px;
  letter-spacing: -0.25px;
  filter: blur(0.8px);
}

.dialog header {
  display: flex;
  align-items: center;
  flex: none;
  height: 26px;
  margin: 0 -7px;
  padding: 0 5px 0 8px;
  background: linear-gradient(90deg, #8a8a8d 0, #8f8f93 35%, #4e4a58 50%, #1f2220 65%, #3a3a3d 80%, #77777a 100%);
}

.dialog header svg {
  width: 13px;
  height: 13px;
  margin-right: 4px;
}

.dialog header span {
  flex: 1;
  color: #15151a;
  font-size: 11.5px;
  letter-spacing: -0.1px;
}

.dialog .x {
  align-self: flex-start;
  width: 43px;
  height: 12px;
  margin-top: 2px;
  border: 1px solid #d99;
  background: linear-gradient(#d4564e, #b3221d);
  color: #fff;
  line-height: 11px;
  text-align: center;
}

.dialog-body {
  display: flex;
  flex-direction: column;
  flex: 1;
  background: #f0f0f0;
}

.intro {
  height: 23px;
  padding-left: 4px;
  line-height: 24px;
}

.field {
  display: flex;
  height: 18.5px;
}

.field label {
  width: 79px;
  margin-right: 6px;
  line-height: 19px;
  text-align: right;
  white-space: nowrap;
}

.input {
  display: flex;
  align-items: center;
  justify-content: space-between;
  box-sizing: border-box;
  height: 18px;
  padding-left: 3px;
  border: 1px solid #d0d0d0;
  border-top-color: #aaa;
  border-left-color: #aaa;
  background: #fff;
}

.input.combo {
  padding-left: 0;
}

.field:nth-of-type(6) .input {
  padding-left: 3px;
}

.option {
  display: flex;
  align-items: center;
  height: 20px;
}

.option label {
  width: 131px;
  margin-right: 8px;
  text-align: right;
  white-space: nowrap;
}

.option.method {
  margin-top: 23px;
}

.option.true-thick {
  margin-top: 23px;
}

.option.position {
  margin-top: 16px;
}

.method span,
.method .radio,
.position span,
.position .radio {
  margin-top: 6px;
}

.option .first {
  width: 85px;
}

.option .top {
  width: 24px;
}

.option .middle {
  width: 36px;
}

.radio {
  flex: none;
  width: 8px;
  height: 8px;
  margin-right: 6px;
  border: 1px solid #9a9a9a;
  border-radius: 50%;
  background: #fafafa;
}

.radio.on {
  background: radial-gradient(#222 38%, #f2f2f2 60%);
}

.check {
  width: 10px;
  height: 10px;
  border: 1px solid #9a9a9a;
  background: #f6f6f6;
}

.actions {
  display: flex;
  align-items: center;
  gap: 8px;
  height: 28px;
  margin-top: auto;
  padding: 0 3px;
  border-top: 1px solid #dadada;
}

.help {
  width: 15px;
  height: 15px;
  margin-right: auto;
  border: 1px solid #8fa6dc;
  background: radial-gradient(#2f55c4 55%, #dfe7fa 65%);
  color: #fff;
  font: bold 12px/15px 'Liberation Sans', sans-serif;
  text-align: center;
}

.actions button {
  display: flex;
  align-items: center;
  justify-content: center;
  width: 69px;
  height: 19px;
  padding: 0;
  border: 1px solid #a5a5a5;
  background: linear-gradient(#f6f6f6, #dadada);
  color: #333;
  font: inherit;
  letter-spacing: inherit;
}

.actions .apply {
  border: 1.5px solid #6fb3cf;
  background: linear-gradient(#f0f6f8, #d2e2e8);
}

.actions svg {
  width: 13px;
  height: 13px;
  margin-right: 4px;
}

/* slide callouts */
.callout {
  position: absolute;
  display: flex;
  flex-direction: column;
  justify-content: center;
  box-sizing: border-box;
  padding: 3px 18px 0;
  border: 5px solid #000;
  background: #fff;
  color: #000;
  font-family: Carlito, Calibri, Lato, sans-serif;
  font-size: 26px;
  font-variant-ligatures: none;
  letter-spacing: 0;
  line-height: 37.6px;
  white-space: nowrap;
}

.callout.one {
  left: 66px;
  top: 202px;
  width: 568px;
  height: 107px;
  font-size: 31.2px;
}

.callout.two {
  left: 1415px;
  top: 817px;
  width: 568px;
  height: 414px;
  font-size: 31.2px;
}
</style>
